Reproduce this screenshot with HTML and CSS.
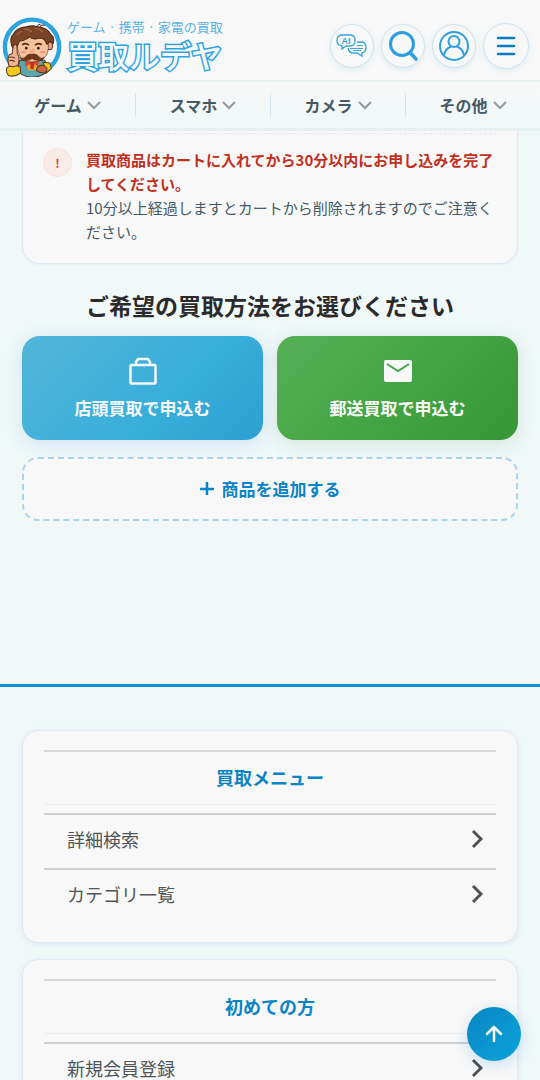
FILE: index.html
```
<!DOCTYPE html>
<html lang="ja">
<head>
    <meta charset="UTF-8">
    <meta name="viewport" content="width=device-width, initial-scale=1.0">
    <title>買取ルデヤ</title>
    <link rel="stylesheet" href="styles.css">
</head>
<body>
    <header class="site-header">
        <div class="header-top">
            <a class="logo" href="#">
                <svg class="logo-face" viewBox="6 20 178 182" aria-hidden="true">
                    <circle cx="95" cy="112" r="81" fill="#f8f8f8" stroke="#2ba4e0" stroke-width="13"/>
                    <!-- body -->
                    <path d="M58 152 L132 152 L150 178 Q125 204 92 203 Q66 200 52 184Z" fill="#5ba6ad" stroke="#43332b" stroke-width="3"/>
                    <path d="M20 174 Q38 162 60 172 L61 190 Q44 203 25 198 Q16 188 20 174Z" fill="#f2c81c" stroke="#57401f" stroke-width="3"/>
                    <path d="M128 158 L148 160 L153 176 L138 190Z" fill="#f2c81c" stroke="#57401f" stroke-width="3"/>
                    <path d="M74 150 L118 150 L106 182 L84 182Z" fill="#eda31d"/>
                    <path d="M88 154 L103 154 L100 178 L91 178Z" fill="#c92f22"/>
                    <path d="M74 152 L92 160 L76 172Z M116 152 L100 160 L113 172Z" fill="#d7443a"/>
                    <!-- head -->
                    <ellipse cx="148" cy="108" rx="8" ry="13" fill="#eaa782" stroke="#5b3424" stroke-width="3"/>
                    <path d="M50 92 Q58 70 96 74 Q140 74 144 102 Q146 134 128 148 Q96 166 66 150 Q50 132 50 92Z" fill="#f7c39d" stroke="#5b3424" stroke-width="2"/>
                    <path d="M34 108 Q28 84 38 76 Q48 54 78 52 Q98 46 110 52 Q142 54 152 76 Q164 84 158 102 L146 96 Q140 112 136 98 Q130 86 120 86 Q98 92 88 82 Q74 94 58 94 Q52 108 46 122 L40 120Z" fill="#7a4526" stroke="#4b2816" stroke-width="3"/>
                    <path d="M72 60 Q86 58 94 68 M104 56 Q120 58 128 68 M50 76 Q58 66 66 66" fill="none" stroke="#a5663a" stroke-width="4"/>
                    <path d="M108 54 Q112 46 120 44 M118 52 Q124 44 134 48" fill="none" stroke="#4b2816" stroke-width="3"/>
                    <path d="M66 106 Q76 98 86 107 M104 107 Q114 98 124 106" fill="none" stroke="#4b2816" stroke-width="5"/>
                    <circle cx="78" cy="116" r="4" fill="#2d2421"/>
                    <circle cx="114" cy="116" r="4" fill="#2d2421"/>
                    <path d="M64 128 h12 M120 128 h14" stroke="#ee9277" stroke-width="5"/>
                    <ellipse cx="95" cy="126" rx="8" ry="8" fill="#eeac84"/>
                    <path d="M94 134 Q82 130 74 143 Q66 149 58 143 Q64 158 84 153 Q92 151 95 147 Q100 153 112 153 Q128 156 132 142 Q124 149 117 142 Q108 130 94 134Z" fill="#70381b" stroke="#3f1e10" stroke-width="1"/>
                    <!-- hands -->
                    <path d="M36 132 L39 110 Q44 101 50 108 L51 132 Q60 144 54 164 Q42 176 26 168 Q20 146 28 135Z" fill="#f1b48d" stroke="#5b3424" stroke-width="3"/>
                    <path d="M27 144 Q36 140 44 146 M27 154 Q36 150 44 156" fill="none" stroke="#5b3424" stroke-width="3"/>
                    <path d="M108 182 Q114 164 130 168 Q144 174 138 186 Q122 194 108 182Z" fill="#c9683f" stroke="#6b2e1c" stroke-width="3"/>
                </svg>
                <span class="logo-text">
                    <span class="logo-tagline">ゲーム · 携帯 · 家電の買取</span>
                    <span class="logo-name">買取ルデヤ</span>
                </span>
            </a>
            <div class="header-actions">
                <button class="icon-button" type="button" aria-label="AIチャット">
                    <svg width="32" height="26" viewBox="0 0 32 26" fill="none" stroke="#3ba3d6" stroke-width="1.3">
                        <path d="M7 2 h7 q5 0 5 5 v1 q0 5 -5 5 h-4 l-4 3 v-3 q-5 -1 -5 -5 v-1 q0 -5 6 -5Z"/>
                        <path d="M21 9 h4 q5 0 5 5 v1 q0 4 -4 5 v3 l-5 -3 h-4 q-4 0 -5 -5"/>
                        <path d="M21 12.500 h6 M14 15.500 h13 M17 17.500 h8" stroke-width="1"/>
                        <text class="ai-label" x="10" y="11" text-anchor="middle">AI</text>
                    </svg>
                </button>
                <button class="icon-button" type="button" aria-label="検索">
                    <svg width="30" height="30" viewBox="0 0 30 30" fill="none" stroke="#2d9fdf" stroke-width="3">
                        <circle cx="14" cy="13" r="11.500"/>
                        <path d="M22 21.500 L28 28" stroke-width="3.500" stroke-linecap="round"/>
                    </svg>
                </button>
                <button class="icon-button" type="button" aria-label="マイページ">
                    <svg width="30" height="30" viewBox="0 0 30 30" fill="none" stroke="#2d9fdf" stroke-width="2">
                        <circle cx="15" cy="15" r="14"/>
                        <circle cx="15" cy="10.500" r="5.500"/>
                        <path d="M5 24.500 C6 19 9 16.500 12 15.500 M25 24.500 C24 19 21 16.500 18 15.500"/>
                    </svg>
                </button>
                <button class="icon-button menu-button" type="button" aria-label="メニュー">
                    <svg width="20" height="20" viewBox="0 0 20 20" stroke="#0b7dbd" stroke-width="2.500" stroke-linecap="round">
                        <path d="M2 2 H18 M2 10 H18 M2 18 H18"/>
                    </svg>
                </button>
            </div>
        </div>
        <nav class="category-nav">
            <a href="#">ゲーム<svg class="chevron-down" viewBox="0 0 14 9"><path d="M1 1 L7 7 L13 1"/></svg></a>
            <a href="#">スマホ<svg class="chevron-down" viewBox="0 0 14 9"><path d="M1 1 L7 7 L13 1"/></svg></a>
            <a href="#">カメラ<svg class="chevron-down" viewBox="0 0 14 9"><path d="M1 1 L7 7 L13 1"/></svg></a>
            <a href="#">その他<svg class="chevron-down" viewBox="0 0 14 9"><path d="M1 1 L7 7 L13 1"/></svg></a>
        </nav>
    </header>

    <main>
        <section class="notice">
            <div class="notice-item">
                <span class="notice-mark">!</span>
                <p>
                    <strong>買取商品はカートに入れてから30分以内にお申し込みを完了してください。</strong><br>
                    10分以上経過しますとカートから削除されますのでご注意ください。
                </p>
            </div>
        </section>

        <h1>ご希望の買取方法をお選びください</h1>
        <div class="methods">
            <button class="method store" type="button">
                <svg width="28" height="28" viewBox="0 0 28 28" fill="none" stroke="#f8f8f8" stroke-width="2.500" stroke-linejoin="round">
                    <rect x="1.500" y="8" width="25" height="18.500" rx="1"/>
                    <path d="M7 8 V5 L9 2 H19 L21 5 V8"/>
                </svg>
                店頭買取で申込む
            </button>
            <button class="method post" type="button">
                <svg width="28" height="28" viewBox="0 0 28 28">
                    <rect x="0" y="3" width="28" height="22" rx="2" fill="#f8f8f8"/>
                    <path d="M3 7 L14 14 L25 7" fill="none" stroke="#45a545" stroke-width="2"/>
                </svg>
                郵送買取で申込む
            </button>
        </div>
        <button class="add-item" type="button">
            <svg width="14" height="14" viewBox="0 0 14 14" stroke="#0a84c4" stroke-width="2.500"><path d="M0 8 H14 M7 1 V14"/></svg>
            商品を追加する
        </button>
    </main>

    <footer class="site-footer">
        <section class="menu-card">
            <h2>買取メニュー</h2>
            <ul>
                <li><a href="#">詳細検索<svg class="chevron-right" viewBox="0 0 12 20"><path d="M2 2 L10 10 L2 18"/></svg></a></li>
                <li><a href="#">カテゴリ一覧<svg class="chevron-right" viewBox="0 0 12 20"><path d="M2 2 L10 10 L2 18"/></svg></a></li>
            </ul>
        </section>
        <section class="menu-card">
            <h2>初めての方</h2>
            <ul>
                <li><a href="#">新規会員登録<svg class="chevron-right" viewBox="0 0 12 20"><path d="M2 2 L10 10 L2 18"/></svg></a></li>
            </ul>
        </section>
    </footer>

    <a class="to-top" href="#" aria-label="ページの先頭へ">
        <svg width="18" height="18" viewBox="0 0 18 18" fill="none" stroke="#f8f8f8" stroke-width="2.500" stroke-linecap="round" stroke-linejoin="round">
            <path d="M9 16 V2 M2 9 L9 2 L16 9"/>
        </svg>
    </a>
</body>
</html>
```
FILE: styles.css
```
* {
    box-sizing: border-box;
}

body {
    margin: 0;
    background-color: #f0f8f8;
    color: #455a64;
    font-family: "Noto Sans CJK JP", sans-serif;
    font-size: 15px;
    line-height: 24px;
}

a {
    color: inherit;
    text-decoration: none;
}

button {
    font-family: inherit;
    cursor: pointer;
}

/* header */
.site-header {
    position: sticky;
    top: 0;
    z-index: 10;
    background-color: #f8f8f8;
    border-bottom: 3px solid #e6f0f0;
}

.header-top {
    display: flex;
    justify-content: space-between;
    align-items: center;
    height: 82px;
    padding: 12px 11px 0 2px;
    border-bottom: 2px solid #e8f0f0;
}

.logo {
    display: flex;
    align-items: center;
    gap: 5px;
    color: #5bb5e4;
}

.logo-face {
    width: 60px;
    height: 61px;
}

.logo-text {
    display: flex;
    flex-direction: column;
}

.logo-tagline {
    font-size: 13px;
    line-height: 18px;
    white-space: nowrap;
}

.logo-name {
    color: #f8f8f8;
    font-size: 31px;
    font-weight: 500;
    line-height: 38px;
    white-space: nowrap;
    -webkit-text-stroke: 3px #2ba4e0;
    paint-order: stroke fill;
}

.header-actions {
    display: flex;
    align-items: center;
    gap: 7px;
}

.icon-button {
    display: flex;
    justify-content: center;
    align-items: center;
    width: 44px;
    height: 44px;
    padding: 0;
    background-color: #f8f8f8;
    border: 1px solid #cfe3f0;
    border-radius: 50%;
    box-shadow: 0 2px 6px rgba(0, 150, 200, 0.1);
}

.menu-button {
    width: 46px;
    height: 46px;
}

.ai-label {
    fill: #3ba3d6;
    stroke: none;
    font-family: "Liberation Sans", sans-serif;
    font-size: 9px;
    font-weight: bold;
}

.category-nav {
    display: grid;
    grid-template-columns: repeat(4, 1fr);
    padding: 11px 0;
    background: linear-gradient(#f8f8f8, #f0f8f8);
}

.category-nav a {
    display: flex;
    justify-content: center;
    align-items: center;
    gap: 5px;
    font-size: 16px;
    font-weight: bold;
}

.category-nav a + a {
    border-left: 1px solid #d3e4ee;
}

.chevron-down {
    width: 14px;
    height: 9px;
    fill: none;
    stroke: #929b9f;
    stroke-width: 2;
}

main {
    padding: 0 22px;
}

/* notice */
.notice {
    padding: 2px 20px 19px;
    background-color: #f8f8f8;
    border: 1px solid #dfebf1;
    border-top: none;
    border-radius: 0 0 18px 18px;
    box-shadow: 0 1px 2px rgba(100, 110, 220, 0.06);
}

.notice-item {
    display: flex;
    align-items: flex-start;
    gap: 14px;
    padding-top: 14px;
    border-top: 1px dashed #e2ebee;
}

.notice-mark {
    flex: none;
    width: 29px;
    height: 29px;
    background-color: #f9ebe8;
    border: 1px solid #fae0dc;
    border-radius: 50%;
    color: #c9463a;
    font-size: 12px;
    font-weight: bold;
    line-height: 27px;
    text-align: center;
}

.notice p {
    margin: 0;
}

.notice strong {
    color: #c0301f;
}

/* purchase methods */
h1 {
    margin: 25px 0 15px;
    color: #2b2b2b;
    font-size: 23px;
    line-height: 32px;
    text-align: center;
}

.methods {
    display: grid;
    grid-template-columns: 1fr 1fr;
    gap: 14px;
}

.method {
    display: flex;
    flex-direction: column;
    align-items: center;
    gap: 10px;
    padding: 21px 0 19px;
    border: none;
    border-radius: 18px;
    color: #f8f8f8;
    font-size: 17px;
    font-weight: bold;
    line-height: 26px;
}

.store {
    background: linear-gradient(135deg, #52b6d8, #38aeda 60%, #2ca0d2);
    box-shadow: 0 4px 18px rgba(40, 130, 220, 0.16);
}

.post {
    background: linear-gradient(135deg, #56b056, #45a545 50%, #369636);
    box-shadow: 0 4px 18px rgba(60, 130, 90, 0.16);
}

.add-item {
    display: flex;
    justify-content: center;
    align-items: center;
    gap: 8px;
    position: relative;
    width: 100%;
    height: 64px;
    margin-top: 17px;
    padding: 0 0 2px;
    background-color: #f8f8f8;
    border: 2px dashed #a9d5ec;
    border-radius: 16px;
    color: #0a84c4;
    font-size: 17px;
    font-weight: bold;
}

/* footer */
.site-footer {
    margin-top: 163px;
    padding: 43px 22px 24px;
    border-top: 3px solid #1292d0;
}

.menu-card {
    margin-bottom: 16px;
    padding: 19px 21px;
    background-color: #f8f8f8;
    border: 1px solid #e0eaf0;
    border-radius: 16px;
    box-shadow: 0 1px 5px rgba(100, 110, 220, 0.12);
}

.menu-card h2 {
    margin: 0 0 8px;
    padding: 12px 0 14px;
    border-top: 2px solid #d8d8d8;
    border-bottom: 1px solid #e6eeee;
    color: #0a84c4;
    font-size: 18px;
    line-height: 26px;
    text-align: center;
}

.menu-card ul {
    margin: 0;
    padding: 0;
    list-style: none;
}

.menu-card li {
    border-top: 2px solid #cfcfcf;
}

.menu-card li a {
    display: flex;
    justify-content: space-between;
    align-items: center;
    padding: 11px 13px 16px 23px;
    color: #505658;
    font-size: 18px;
    line-height: 26px;
}

.chevron-right {
    width: 12px;
    height: 20px;
    fill: none;
    stroke: #505050;
    stroke-width: 3;
}

.to-top {
    display: flex;
    justify-content: center;
    align-items: center;
    position: fixed;
    right: 19px;
    bottom: 19px;
    z-index: 10;
    width: 54px;
    height: 54px;
    background: linear-gradient(135deg, #0884c2, #0a98d0 60%, #08a4d6);
    border-radius: 50%;
    box-shadow: 0 4px 16px rgba(20, 120, 220, 0.2);
}
```
